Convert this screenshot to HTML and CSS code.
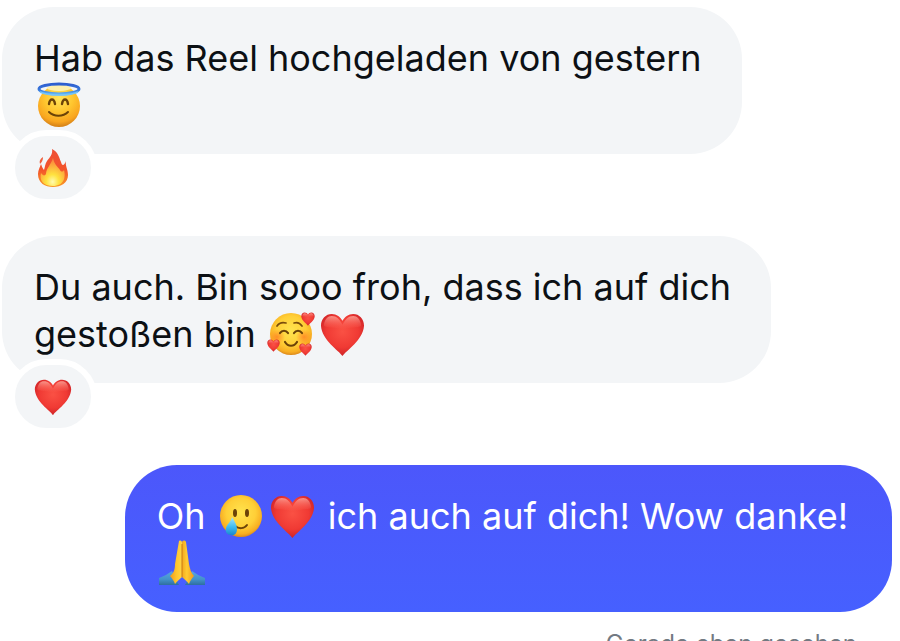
FILE: index.html
```html
<!DOCTYPE html>
<html lang="de">
<head>
    <meta charset="utf-8">
    <title>Chat</title>
    <meta name="viewport" content="width=device-width, initial-scale=1">
    <link rel="stylesheet" href="styles.css">
</head>
<body>
    <!-- shared emoji shapes -->
    <svg class="sprite" aria-hidden="true">
        <defs>
            <radialGradient id="skin" cx="50%" cy="42%" r="58%">
                <stop offset="0" stop-color="#ffe44f"/>
                <stop offset="0.6" stop-color="#ffcf37"/>
                <stop offset="0.88" stop-color="#f8ae22"/>
                <stop offset="1" stop-color="#dc8a1c"/>
            </radialGradient>
            <radialGradient id="angel" cx="50%" cy="30%" r="68%">
                <stop offset="0" stop-color="#ffe65c"/>
                <stop offset="0.5" stop-color="#ffc62f"/>
                <stop offset="0.85" stop-color="#f9a51f"/>
                <stop offset="1" stop-color="#d88519"/>
            </radialGradient>
            <radialGradient id="blush">
                <stop offset="0" stop-color="#ff7a22" stop-opacity="0.75"/>
                <stop offset="1" stop-color="#ff7a22" stop-opacity="0"/>
            </radialGradient>
            <linearGradient id="halo" x1="0" y1="0" x2="0" y2="1">
                <stop offset="0" stop-color="#2f5fd0"/>
                <stop offset="0.6" stop-color="#3778dc"/>
                <stop offset="1" stop-color="#62b8f6"/>
            </linearGradient>
            <radialGradient id="red" cx="50%" cy="42%" r="62%">
                <stop offset="0" stop-color="#fa5144"/>
                <stop offset="0.6" stop-color="#f03a34"/>
                <stop offset="1" stop-color="#c81f25"/>
            </radialGradient>
            <linearGradient id="shine" x1="0" y1="0" x2="0" y2="1">
                <stop offset="0" stop-color="#ffb5a8" stop-opacity="0.75"/>
                <stop offset="1" stop-color="#ff6a5c" stop-opacity="0"/>
            </linearGradient>
            <linearGradient id="tear" x1="0" y1="0" x2="0" y2="1">
                <stop offset="0" stop-color="#a9e6fb"/>
                <stop offset="0.55" stop-color="#3dbaf0"/>
                <stop offset="1" stop-color="#1a86cf"/>
            </linearGradient>
            <linearGradient id="flame" x1="0" y1="0" x2="0" y2="1">
                <stop offset="0" stop-color="#ee4f35"/>
                <stop offset="0.55" stop-color="#f3542b"/>
                <stop offset="1" stop-color="#f99a25"/>
            </linearGradient>
            <radialGradient id="glow" cx="50%" cy="85%" r="75%">
                <stop offset="0" stop-color="#fffbb0"/>
                <stop offset="0.35" stop-color="#ffe23f"/>
                <stop offset="1" stop-color="#fb8b3c"/>
            </radialGradient>
            <linearGradient id="hand-left" x1="0" y1="0" x2="1" y2="0">
                <stop offset="0" stop-color="#f09a1c"/>
                <stop offset="0.55" stop-color="#ffc62d"/>
                <stop offset="1" stop-color="#ffd545"/>
            </linearGradient>
            <linearGradient id="hand-right" x1="0" y1="0" x2="1" y2="0">
                <stop offset="0" stop-color="#f3a81f"/>
                <stop offset="0.4" stop-color="#ffcb32"/>
                <stop offset="1" stop-color="#f09a1c"/>
            </linearGradient>
            <linearGradient id="sleeve" x1="0" y1="0" x2="0" y2="1">
                <stop offset="0" stop-color="#5aa7e0"/>
                <stop offset="0.6" stop-color="#4391cb"/>
                <stop offset="1" stop-color="#2f6f9f"/>
            </linearGradient>
        </defs>
        <symbol id="heart" viewBox="0 0 46 46">
            <path fill="url(#red)" d="M23 45C19 39 2 29 1 14C1 7 6 2 12 2C17 2 21 5 23 9C25 5 29 2 34 2C40 2 45 7 45 14C44 29 27 39 23 45Z"/>
            <path fill="url(#shine)" d="M4 13C5 7 8 4 12 4C17 4 20 7 23 13C26 7 29 4 34 4C38 4 41 7 42 13C42 17 35 14 23 18C11 14 4 17 4 13Z"/>
        </symbol>
    </svg>

    <main class="chat">
        <article class="message">
            <p class="bubble">Hab das Reel hochgeladen von gestern<br>
                <svg class="emoji" viewBox="0 0 46 46" role="img" aria-label="Heiligenschein">
                    <circle cx="23" cy="24" r="21" fill="url(#angel)"/>
                    <ellipse cx="23" cy="6" rx="12" ry="3" fill="#fff0ad"/>
                    <ellipse cx="23" cy="7" rx="20" ry="5" fill="none" stroke="url(#halo)" stroke-width="3"/>
                    <path d="M4 10C12 14 34 14 42 10" fill="none" stroke="#75c4f8" stroke-width="1.5"/>
                    <path d="M13 22C14 16 18 16 19 22M26 22C27 16 31 16 32 22" fill="none" stroke="#6b4308" stroke-width="2.4" stroke-linecap="round"/>
                    <path d="M13 30C18 35 27 35 32 30" fill="none" stroke="#6b4308" stroke-width="2" stroke-linecap="round"/>
                </svg>
            </p>
            <button class="reaction" type="button" aria-label="Feuer">
                <svg viewBox="0 0 40 40">
                    <path fill="url(#flame)" d="M19 1C25 4 26 9 28 14C29 18 31 18 33 13C32 18 35 21 35 27C35 35 28 39 20 39C12 39 5 35 5 26C5 22 7 19 8 16C9 19 10 21 11 22C12 19 12 16 14 13C17 9 20 6 19 1Z"/>
                    <path fill="#f0603f" d="M10 9C7 11 6 13 7 16C9 14 10 12 10 9Z"/>
                    <path fill="url(#glow)" d="M20 10C21 16 25 19 27 22C28 24 30 24 31 22C33 29 31 38 20 38C10 38 6 32 8 25C10 28 12 28 13 26C13 20 18 17 20 10Z"/>
                </svg>
            </button>
        </article>

        <article class="message">
            <p class="bubble">Du auch. Bin sooo froh, dass ich auf dich<br>
                gestoßen bin
                <svg class="emoji" viewBox="0 0 46 46" role="img" aria-label="Lächeln mit Herzen">
                    <circle cx="23" cy="23" r="21" fill="url(#skin)"/>
                    <circle cx="9" cy="26" r="8" fill="url(#blush)"/>
                    <circle cx="36" cy="26" r="8" fill="url(#blush)"/>
                    <path d="M9 15C11 12 14 11 18 12M26 12C29 11 32 12 34 15" fill="none" stroke="#7a4d0c" stroke-width="1.7" stroke-linecap="round"/>
                    <path d="M12 22C14 19 18 19 20 22M26 22C28 19 32 19 34 22" fill="none" stroke="#6b4308" stroke-width="2.2" stroke-linecap="round"/>
                    <path d="M17 31C20 36 26 36 29 31" fill="none" stroke="#6b4308" stroke-width="2.2" stroke-linecap="round"/>
                    <use href="#heart" x="33" y="1" width="14" height="14"/>
                    <use href="#heart" x="-1" y="28" width="13" height="13"/>
                    <use href="#heart" x="31" y="32" width="13" height="13"/>
                </svg><svg class="emoji" viewBox="0 0 46 46" role="img" aria-label="Rotes Herz">
                    <use href="#heart" x="1" y="1" width="45" height="45"/>
                </svg>
            </p>
            <button class="reaction" type="button" aria-label="Rotes Herz">
                <svg viewBox="0 0 40 40">
                    <use href="#heart" x="1" y="1" width="38" height="38"/>
                </svg>
            </button>
        </article>

        <article class="message own">
            <p class="bubble">Oh
                <svg class="emoji" viewBox="0 0 46 46" role="img" aria-label="Lächeln mit Träne">
                    <circle cx="23" cy="23" r="21" fill="url(#skin)"/>
                    <ellipse cx="17" cy="20" rx="2" ry="4" fill="#6b4308"/>
                    <ellipse cx="29" cy="20" rx="2" ry="4" fill="#6b4308"/>
                    <path d="M17 33C21 36 26 36 29 32" fill="none" stroke="#6b4308" stroke-width="2" stroke-linecap="round"/>
                    <path fill="url(#tear)" d="M14 24C17 29 19 32 19 36C19 41 16 43 13 42C9 42 7 39 8 35C9 31 13 29 14 24Z"/>
                </svg><svg class="emoji" viewBox="0 0 46 46" role="img" aria-label="Rotes Herz">
                    <use href="#heart" x="1" y="1" width="45" height="45"/>
                </svg>
                ich auch auf dich! Wow danke!<br>
                <svg class="emoji" viewBox="0 0 46 46" role="img" aria-label="Gefaltete Hände">
                    <path fill="url(#sleeve)" d="M0 38C5 36 9 34 13 31L20 45H0Z"/>
                    <path fill="url(#sleeve)" d="M46 38C41 36 37 34 33 31L26 45H46Z"/>
                    <path fill="url(#hand-left)" d="M20 1C22 0 23 1 23 3V37C21 39 18 41 16 44C15 41 13 38 11 36C15 33 16 29 16 24Z"/>
                    <path fill="url(#hand-right)" d="M23 3C23 0 26 0 27 2L30 24C31 29 32 33 35 36C33 38 31 41 30 44C28 41 25 39 23 37Z"/>
                    <path d="M23 4V37" stroke="#c97a12" stroke-width="1"/>
                </svg>
            </p>
        </article>

        <p class="seen">Gerade eben gesehen</p>
    </main>
</body>
</html>
```
FILE: styles.css
```css
* {
    box-sizing: border-box;
}
body {
    margin: 0;
    background: #ffffff;
    color: #0c1014;
    font-family: Inter, "Liberation Sans", sans-serif;
}
.sprite {
    position: absolute;
    width: 0;
    height: 0;
}
.chat {
    display: flex;
    flex-direction: column;
    gap: 82px;
    height: 100vh;
    padding: 7px 8px 0 2px;
    overflow: hidden;
}
.message {
    position: relative;
    flex: none;
    align-self: flex-start;
}
.bubble {
    margin: 0;
    padding: 28px 40px 25px 32px;
    border-radius: 52px;
    background: #f3f5f7;
    font-size: 36px;
    line-height: 47px;
}
.own {
    align-self: flex-end;
}
.own .bubble {
    padding-right: 44px;
    background: linear-gradient(#4c57fb, #4660ff);
    color: #ffffff;
}
.emoji {
    width: 46px;
    height: 46px;
    margin: 0 3px 0 2px;
    vertical-align: -10px;
    overflow: visible;
}

/* sits over the lower left corner of the bubble */
.reaction {
    position: absolute;
    left: 7px;
    bottom: -51px;
    display: flex;
    align-items: center;
    justify-content: center;
    width: 88px;
    height: 75px;
    padding: 0;
    border: 6px solid #ffffff;
    border-radius: 38px;
    background: #f3f5f7;
}
.reaction svg {
    width: 40px;
    height: 40px;
}

.seen {
    flex: none;
    align-self: flex-end;
    margin: -66px 35px 0 0;
    color: #737a82;
    font-size: 24px;
    line-height: 32px;
}
```
